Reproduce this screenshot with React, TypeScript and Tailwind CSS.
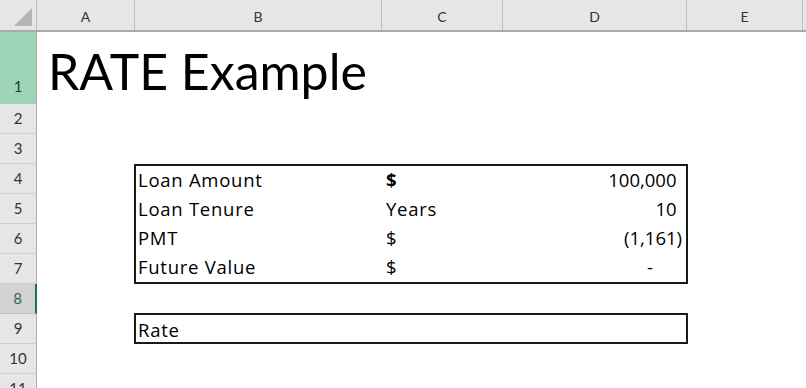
const cols = ["A", "B", "C", "D", "E"];
const colWidths = ["w-[98px]", "w-[247px]", "w-[121px]", "w-[184px]", "w-[116px]"];
const rowNums = [1, 2, 3, 4, 5, 6, 7, 8, 9, 10, 11];

const font = { fontFamily: "Lato, 'Open Sans', sans-serif" };
const bodyFont = { fontFamily: "'Open Sans', Lato, sans-serif" };

const lines = [
  { label: "Loan Amount", unit: "$", bold: true, value: "100,000", paren: false },
  { label: "Loan Tenure", unit: "Years", bold: false, value: "10", paren: false },
  { label: "PMT", unit: "$", bold: false, value: "(1,161)", paren: true },
  { label: "Future Value", unit: "$", bold: false, value: "-", paren: false },
];

function RowHeader({ n }: { n: number }) {
  const h = n === 1 ? "h-[72px]" : "h-[30px]";
  if (n === 1)
    return (
      <div className={`${h} w-[37px] flex items-end justify-center pb-[6px] bg-[#9fd5b7] border-b border-[#a8c9b6] border-r border-r-[#ababab] text-[15px] text-[#1e3d2b]`}>
        {n}
      </div>
    );
  if (n === 8)
    return (
      <div className={`${h} w-[37px] flex items-center justify-center bg-[#d2d2d2] border-b border-[#c4c4c4] border-r-2 border-r-[#217346] text-[15px] text-[#2b6e53]`}>
        {n}
      </div>
    );
  return (
    <div className={`${h} w-[37px] flex items-center justify-center bg-[#e6e6e6] border-b border-[#cfcfcf] border-r border-r-[#ababab] text-[15px] text-[#333]`}>
      {n}
    </div>
  );
}

export default function App() {
  return (
    <div className="w-[806px] h-[388px] overflow-hidden bg-white text-black" style={font}>
      {/* column headers */}
      <div className="flex h-[32px] bg-[#e6e6e6] border-b-2 border-[#ababab]">
        <div className="w-[37px] shrink-0 flex items-end justify-end pr-[4px] pb-[4px] border-r border-[#bdbdbd]">
          <svg width="18" height="18" viewBox="0 0 18 18">
            <polygon points="18,0 18,18 0,18" fill="#b4b4b4" />
          </svg>
        </div>
        {cols.map((c, i) => (
          <div
            key={c}
            className={`${colWidths[i]} shrink-0 flex items-center justify-center pt-[3px] text-[14px] text-[#333] border-r border-[#bdbdbd]`}
          >
            {c}
          </div>
        ))}
        <div className="flex-1" />
      </div>

      <div className="flex">
        <div className="flex flex-col shrink-0">
          {rowNums.map((n) => (
            <RowHeader key={n} n={n} />
          ))}
        </div>

        {/* sheet body */}
        <div className="flex flex-col flex-1">
          <div className="h-[72px] flex items-end pl-[11px] pb-[8px]">
            <span className="text-[50px] leading-none whitespace-nowrap">RATE Example</span>
          </div>
          <div className="h-[60px]" />

          <div
            className="ml-[97px] w-[554px] h-[120px] border-2 border-[#1a1a1a] grid grid-cols-[246px_120px_1fr] grid-rows-4 text-[18.5px] tracking-[0.04em] leading-none"
            style={bodyFont}
          >
            {lines.map((l) => (
              <div key={l.label} className="contents">
                <div className="flex items-end pl-[2px] pb-[6px]">{l.label}</div>
                <div className={`flex items-end pl-[4px] pb-[6px] ${l.bold ? "font-bold" : ""}`}>{l.unit}</div>
                <div className="flex items-end justify-end pr-[4px] pb-[6px] tracking-normal">
                  {l.value === "-" ? (
                    <span className="pr-[29px]">-</span>
                  ) : (
                    <span>
                      {l.value}
                      {!l.paren && <span className="invisible">)</span>}
                    </span>
                  )}
                </div>
              </div>
            ))}
          </div>

          <div className="h-[29px]" />
          <div
            className="ml-[97px] w-[554px] h-[31px] border-2 border-[#1a1a1a] flex items-end pl-[2px] pb-[3px] text-[18.5px] tracking-[0.04em] leading-none"
            style={bodyFont}
          >
            Rate
          </div>
        </div>
      </div>
    </div>
  );
}
